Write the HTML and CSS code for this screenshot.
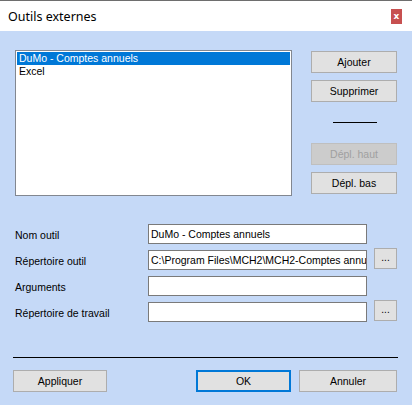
FILE: index.html
```html
<!DOCTYPE html>
<html>
<head>
<meta charset="utf-8">
<link rel="stylesheet" href="styles.css">
</head>
<body>
<div class="window">
  <div class="titlebar">
    <span class="title">Outils externes</span>
    <span class="close">x</span>
  </div>
  <div class="content">
    <div class="top">
      <div class="listbox">
        <div class="item selected">DuMo - Comptes annuels</div>
        <div class="item">Excel</div>
      </div>
      <div class="side">
        <button class="btn side-btn">Ajouter</button>
        <button class="btn side-btn">Supprimer</button>
        <div class="sep"></div>
        <button class="btn side-btn disabled">Dépl. haut</button>
        <button class="btn side-btn">Dépl. bas</button>
      </div>
    </div>
    <div class="form">
      <label class="lbl">Nom outil</label>
      <div class="field">DuMo - Comptes annuels</div>
      <span></span>
      <label class="lbl">Répertoire outil</label>
      <div class="field">C:\Program Files\MCH2\MCH2-Comptes annuels</div>
      <button class="btn browse">...</button>
      <label class="lbl">Arguments</label>
      <div class="field"></div>
      <span></span>
      <label class="lbl">Répertoire de travail</label>
      <div class="field"></div>
      <button class="btn browse">...</button>
    </div>
    <div class="hr"></div>
    <div class="bottom">
      <button class="btn apply">Appliquer</button>
      <div class="right">
        <button class="btn ok">OK</button>
        <button class="btn cancel">Annuler</button>
      </div>
    </div>
  </div>
</div>
</body>
</html>
```
FILE: styles.css
```css
html, body {
  margin: 0;
  padding: 0;
}
body {
  width: 412px;
  height: 405px;
  overflow: hidden;
  font-family: "Liberation Sans", Arial, sans-serif;
  font-size: 10.5px;
  color: #000;
}
.window {
  width: 412px;
  height: 405px;
  background: #c5d9f7;
  border-top: 1px solid #6e6e6e;
  box-sizing: border-box;
}
.titlebar {
  height: 30px;
  background: #fff;
  display: flex;
  align-items: center;
  justify-content: space-between;
  padding-left: 8px;
  padding-right: 10px;
}
.title {
  font-family: "Noto Sans", "Open Sans", sans-serif;
  font-size: 12.5px;
  color: #000;
}
.close {
  width: 11px;
  height: 15px;
  background: #c75050;
  color: #fff;
  font-family: "DejaVu Sans", sans-serif;
  font-weight: bold;
  font-size: 9px;
  line-height: 14px;
  text-align: center;
}
.content {
  padding: 19px 14px 0 15px;
}
.top {
  display: flex;
  align-items: flex-start;
}
.listbox {
  width: 277px;
  height: 146px;
  box-sizing: border-box;
  border: 1px solid #828790;
  background: #fff;
  padding: 1px;
}
.item {
  height: 13px;
  line-height: 13px;
  padding-left: 2px;
  white-space: nowrap;
}
.item.selected {
  background: #0078d7;
  color: #fff;
}
.side {
  margin-left: 19px;
  width: 86px;
  display: flex;
  flex-direction: column;
  padding-top: 1px;
}
.btn {
  font-family: "Liberation Sans", Arial, sans-serif;
  font-size: 10.5px;
  color: #000;
  background: #e1e1e1;
  border: 1px solid #adadad;
  box-sizing: border-box;
  padding: 0;
  margin: 0;
  line-height: 1;
}
.side-btn {
  width: 86px;
  height: 22px;
}
.side-btn + .side-btn {
  margin-top: 7px;
}
.sep {
  width: 44px;
  height: 1px;
  background: #000;
  margin: 20px 0 20px 22px;
}
.btn.disabled {
  background: #cccccc;
  border-color: #bfbfbf;
  color: #a0a0a0;
}
.form {
  margin-top: 28px;
  display: grid;
  grid-template-columns: 133px 219px 30px;
  grid-auto-rows: 20px;
  column-gap: 0;
  row-gap: 6px;
  align-items: center;
}
.lbl {
  white-space: nowrap;
  padding-top: 2px;
}
.field {
  height: 20px;
  box-sizing: border-box;
  border: 1px solid #7a7a7a;
  background: #fff;
  line-height: 18px;
  padding-left: 2px;
  white-space: nowrap;
  overflow: hidden;
}
.browse {
  justify-self: end;
  align-self: start;
  width: 23px;
  height: 21px;
  margin-top: -2px;
  font-size: 10px;
  padding-bottom: 1px;
}
.hr {
  margin-top: 35px;
  margin-left: -2px;
  width: 385px;
  height: 1px;
  background: #000;
}
.bottom {
  margin-top: 12px;
  margin-left: -2px;
  display: flex;
  justify-content: space-between;
  width: 384px;
}
.right {
  display: flex;
  gap: 8px;
}
.apply {
  width: 94px;
  height: 22px;
}
.ok {
  width: 95px;
  height: 22px;
  border: 2px solid #0078d7;
}
.cancel {
  width: 98px;
  height: 22px;
}
```
